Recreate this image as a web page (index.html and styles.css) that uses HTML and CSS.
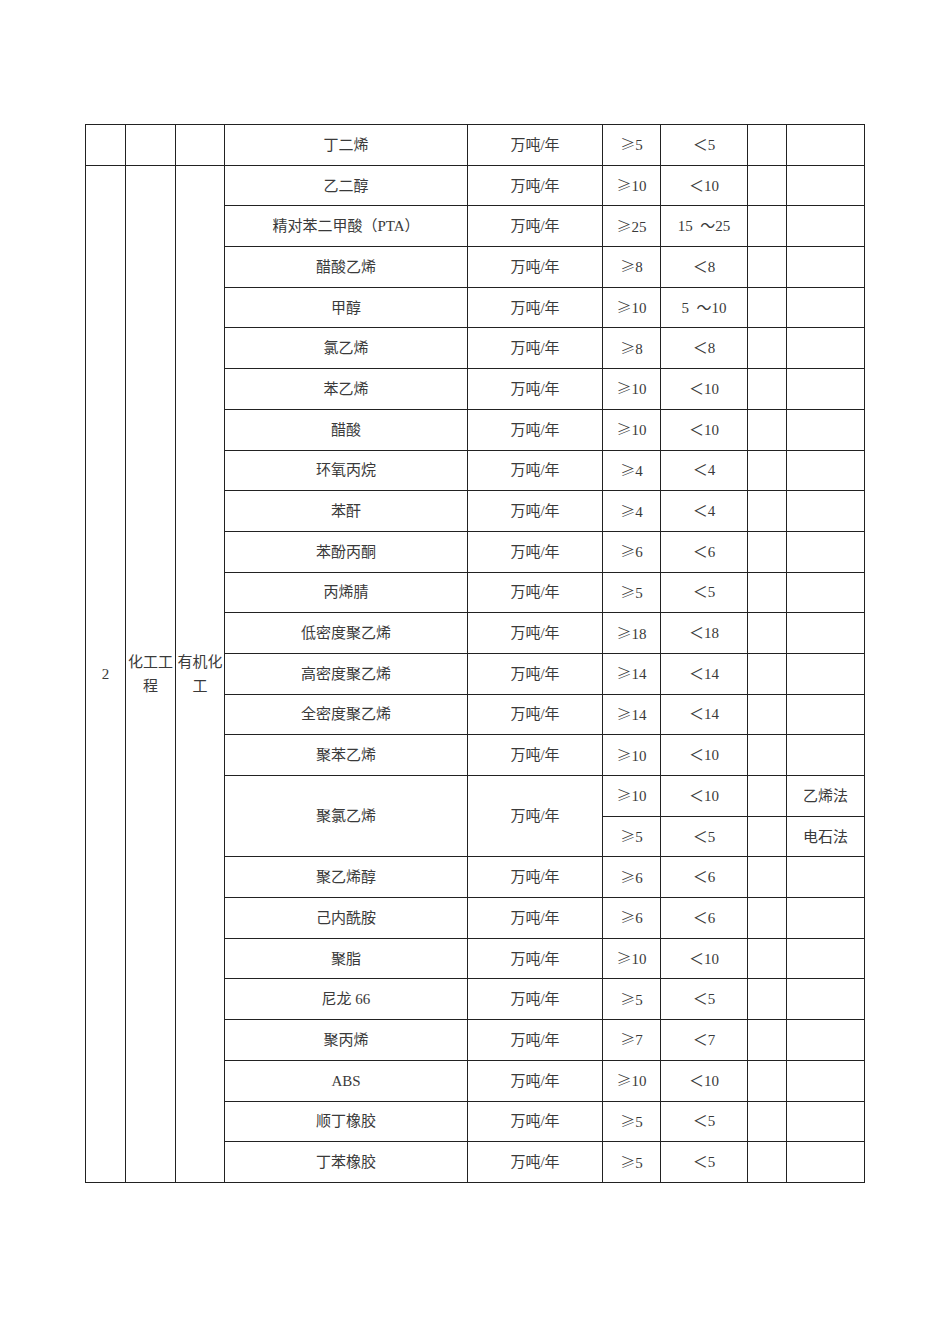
FILE: index.html
```html
<!DOCTYPE html>
<html lang="zh">
<head>
<meta charset="utf-8">
<link rel="stylesheet" href="styles.css">
</head>
<body>
<table class="grid">
  <colgroup>
    <col class="c1"><col class="c2"><col class="c3"><col class="c4"><col class="c5"><col class="c6"><col class="c7"><col class="c8"><col class="c9">
  </colgroup>
  <tbody>
    <tr><td></td><td></td><td></td><td>丁二烯</td><td>万吨/年</td><td><span class="s">≥</span>5</td><td>＜5</td><td></td><td></td></tr>
    <tr><td rowspan="25">2</td><td rowspan="25" class="v">化工工程</td><td rowspan="25" class="v">有机化工</td><td>乙二醇</td><td>万吨/年</td><td><span class="s">≥</span>10</td><td>＜10</td><td></td><td></td></tr>
    <tr><td>精对苯二甲酸（PTA）</td><td>万吨/年</td><td><span class="s">≥</span>25</td><td>15&nbsp; ～25</td><td></td><td></td></tr>
    <tr><td>醋酸乙烯</td><td>万吨/年</td><td><span class="s">≥</span>8</td><td>＜8</td><td></td><td></td></tr>
    <tr><td>甲醇</td><td>万吨/年</td><td><span class="s">≥</span>10</td><td>5&nbsp; ～10</td><td></td><td></td></tr>
    <tr><td>氯乙烯</td><td>万吨/年</td><td><span class="s">≥</span>8</td><td>＜8</td><td></td><td></td></tr>
    <tr><td>苯乙烯</td><td>万吨/年</td><td><span class="s">≥</span>10</td><td>＜10</td><td></td><td></td></tr>
    <tr><td>醋酸</td><td>万吨/年</td><td><span class="s">≥</span>10</td><td>＜10</td><td></td><td></td></tr>
    <tr><td>环氧丙烷</td><td>万吨/年</td><td><span class="s">≥</span>4</td><td>＜4</td><td></td><td></td></tr>
    <tr><td>苯酐</td><td>万吨/年</td><td><span class="s">≥</span>4</td><td>＜4</td><td></td><td></td></tr>
    <tr><td>苯酚丙酮</td><td>万吨/年</td><td><span class="s">≥</span>6</td><td>＜6</td><td></td><td></td></tr>
    <tr><td>丙烯腈</td><td>万吨/年</td><td><span class="s">≥</span>5</td><td>＜5</td><td></td><td></td></tr>
    <tr><td>低密度聚乙烯</td><td>万吨/年</td><td><span class="s">≥</span>18</td><td>＜18</td><td></td><td></td></tr>
    <tr><td>高密度聚乙烯</td><td>万吨/年</td><td><span class="s">≥</span>14</td><td>＜14</td><td></td><td></td></tr>
    <tr><td>全密度聚乙烯</td><td>万吨/年</td><td><span class="s">≥</span>14</td><td>＜14</td><td></td><td></td></tr>
    <tr><td>聚苯乙烯</td><td>万吨/年</td><td><span class="s">≥</span>10</td><td>＜10</td><td></td><td></td></tr>
    <tr><td rowspan="2">聚氯乙烯</td><td rowspan="2">万吨/年</td><td><span class="s">≥</span>10</td><td>＜10</td><td></td><td>乙烯法</td></tr>
    <tr><td><span class="s">≥</span>5</td><td>＜5</td><td></td><td>电石法</td></tr>
    <tr><td>聚乙烯醇</td><td>万吨/年</td><td><span class="s">≥</span>6</td><td>＜6</td><td></td><td></td></tr>
    <tr><td>己内酰胺</td><td>万吨/年</td><td><span class="s">≥</span>6</td><td>＜6</td><td></td><td></td></tr>
    <tr><td>聚脂</td><td>万吨/年</td><td><span class="s">≥</span>10</td><td>＜10</td><td></td><td></td></tr>
    <tr><td>尼龙 66</td><td>万吨/年</td><td><span class="s">≥</span>5</td><td>＜5</td><td></td><td></td></tr>
    <tr><td>聚丙烯</td><td>万吨/年</td><td><span class="s">≥</span>7</td><td>＜7</td><td></td><td></td></tr>
    <tr><td>ABS</td><td>万吨/年</td><td><span class="s">≥</span>10</td><td>＜10</td><td></td><td></td></tr>
    <tr><td>顺丁橡胶</td><td>万吨/年</td><td><span class="s">≥</span>5</td><td>＜5</td><td></td><td></td></tr>
    <tr><td>丁苯橡胶</td><td>万吨/年</td><td><span class="s">≥</span>5</td><td>＜5</td><td></td><td></td></tr>
  </tbody>
</table>
</body>
</html>
```

FILE: styles.css
```css
html, body {
  margin: 0;
  padding: 0;
  background: #fff;
}

body {
  padding: 124px 0 0 85px;
  font-family: "Liberation Serif", "Noto Sans CJK SC", serif;
  font-size: 15px;
  color: #3a3a3a;
}

.grid {
  border-collapse: collapse;
  table-layout: fixed;
  width: 779px;
}

.grid td {
  border: 1px solid #222;
  height: 39.7px;
  padding: 0;
  text-align: center;
  vertical-align: middle;
  line-height: 24px;
  white-space: normal;
  word-break: break-all;
}

.grid .s {
  font-family: "Noto Sans CJK SC", sans-serif;
  font-weight: 300;
}

.c1 { width: 40px; }
.c2 { width: 50px; }
.c3 { width: 49px; }
.c4 { width: 243px; }
.c5 { width: 135px; }
.c6 { width: 58px; }
.c7 { width: 87px; }
.c8 { width: 39px; }
.c9 { width: 78px; }
```
